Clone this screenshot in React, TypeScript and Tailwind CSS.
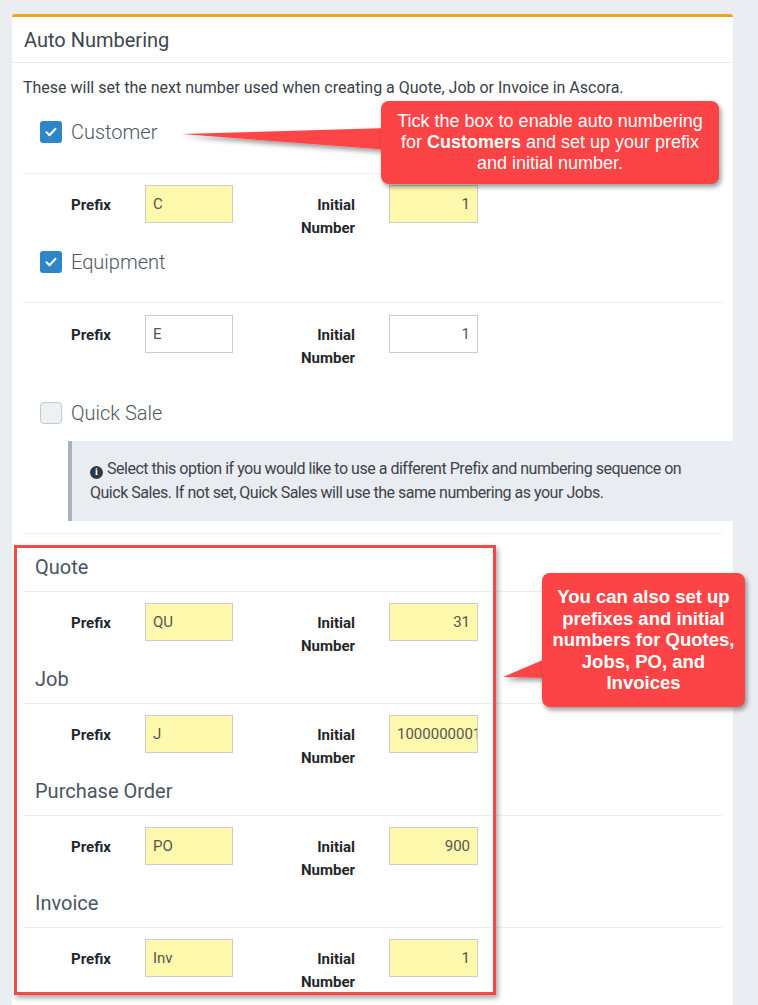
import React from 'react';

type Field = {
  prefix: string;
  initial: string;
  filled: boolean;
};

const font = { fontFamily: 'Roboto, "Noto Sans", sans-serif' };

function CheckBox({ checked }: { checked: boolean }) {
  if (!checked) {
    return (
      <span className="w-[22px] h-[22px] rounded-[4px] border border-[#c3cad2] bg-[#eef1f4]" />
    );
  }
  return (
    <span className="w-[22px] h-[22px] rounded-[3px] bg-[#2d86c7] flex items-center justify-center">
      <svg width="14" height="14" viewBox="0 0 14 14" fill="none">
        <path d="M2.5 7.2l3 3 6-6.4" stroke="white" strokeWidth="2" strokeLinecap="round" strokeLinejoin="round" />
      </svg>
    </span>
  );
}

function CheckRow({ label, checked, className }: { label: string; checked: boolean; className: string }) {
  return (
    <div className={`flex items-center h-[30px] pl-[17px] gap-[9px] ${className}`}>
      <CheckBox checked={checked} />
      <span className="text-[20px] font-light text-[#4c5763]">{label}</span>
    </div>
  );
}

function Input({ value, filled, right }: { value: string; filled: boolean; right?: boolean }) {
  return (
    <div
      className={`h-[38px] border border-[#cccccc] px-[7px] text-[15px] leading-[36px] text-[#555] overflow-hidden whitespace-nowrap ${
        filled ? 'bg-[#fff9ad]' : 'bg-white'
      } ${right ? 'text-right w-[89px]' : 'w-[88px]'}`}
    >
      {value}
    </div>
  );
}

function FieldRow({ field, className }: { field: Field; className: string }) {
  return (
    <div className={`flex items-start ${className}`}>
      <div className="w-[88px] text-right pt-[9px] text-[15px] leading-[23px] font-bold text-[#1f272e]">Prefix</div>
      <div className="ml-[34px]">
        <Input value={field.prefix} filled={field.filled} />
      </div>
      <div className="w-[122px] text-right pt-[9px] text-[15px] leading-[23px] font-bold text-[#1f272e]">
        Initial
        <br />
        Number
      </div>
      <div className="ml-[34px]">
        <Input value={field.initial} filled={field.filled} right />
      </div>
    </div>
  );
}

const Divider = ({ className }: { className: string }) => (
  <div className={`h-px bg-[#eceef1] ${className}`} />
);

const sections: { title: string; field: Field }[] = [
  { title: 'Quote', field: { prefix: 'QU', initial: '31', filled: true } },
  { title: 'Job', field: { prefix: 'J', initial: '1000000001', filled: true } },
  { title: 'Purchase Order', field: { prefix: 'PO', initial: '900', filled: true } },
  { title: 'Invoice', field: { prefix: 'Inv', initial: '1', filled: true } },
];

export default function App() {
  return (
    <div className="relative min-h-[1005px] h-[1005px] overflow-hidden bg-[#eaedf1] pt-[14px] pl-[12px]" style={font}>
      <div className="w-[721px] bg-white border-t-[3px] border-[#f5a21b] rounded-t-[3px] pb-[40px]">
        <div className="h-[46px] flex items-center px-[12px] border-b border-[#e8eaed] text-[20px] text-[#3b4752]">
          Auto Numbering
        </div>
        <div className="px-[11px]">
          <p className="pt-[15px] text-[16px] leading-[20px] text-[#3a4149]">
            These will set the next number used when creating a Quote, Job or Invoice in Ascora.
          </p>

          <CheckRow label="Customer" checked className="mt-[19px]" />
          <Divider className="mt-[26px]" />
          <FieldRow field={{ prefix: 'C', initial: '1', filled: true }} className="mt-[11px]" />

          <CheckRow label="Equipment" checked className="mt-[7px]" />
          <Divider className="mt-[25px]" />
          <FieldRow field={{ prefix: 'E', initial: '1', filled: false }} className="mt-[12px]" />

          <CheckRow label="Quick Sale" checked={false} className="mt-[28px]" />
          <div className="mt-[13px] ml-[45px] -mr-[11px] border-l-[4px] border-[#aab3bb] bg-[#e9ecf0] pl-[18px] pr-[12px] py-[16px] text-[16px] leading-[24px] tracking-[-0.03em] text-[#3d444b]">
            <p className="max-w-[600px]">
              <span
                className="inline-flex align-[-1px] mr-[4px] w-[13px] h-[13px] rounded-full bg-[#2f3942] text-white text-[10px] font-bold items-center justify-center leading-none tracking-normal"
                style={{ fontFamily: '"Liberation Serif", serif' }}
              >
                i
              </span>
              Select this option if you would like to use a different Prefix and numbering sequence on Quick Sales. If
              not set, Quick Sales will use the same numbering as your Jobs.
            </p>
          </div>
          <Divider className="mt-[12px]" />

          {sections.map((s, i) => (
            <div key={s.title}>
              <div className={`text-[20px] leading-[24px] text-[#4a5561] pl-[12px] ${i === 0 ? 'mt-[21px]' : 'mt-[9px]'}`}>
                {s.title}
              </div>
              <Divider className="mt-[12px]" />
              <FieldRow field={s.field} className="mt-[11px]" />
            </div>
          ))}
        </div>
      </div>

      {/* red highlight box */}
      <div className="absolute left-[14px] top-[545px] w-[482px] h-[450px] border-[3px] border-[#f24a4b] shadow-[2px_3px_5px_rgba(0,0,0,0.35)]" />

      {/* callout tails */}
      <svg className="absolute left-0 top-0 pointer-events-none" width="758" height="1005">
        <defs>
          <filter id="sh" x="-20%" y="-20%" width="140%" height="160%">
            <feDropShadow dx="2" dy="3" stdDeviation="2.5" floodColor="#000" floodOpacity="0.4" />
          </filter>
        </defs>
        <polygon points="182,134 390,128 390,150" fill="#fc4446" filter="url(#sh)" />
        <polygon points="503,677 550,657 550,678" fill="#fc4446" filter="url(#sh)" />
      </svg>

      {/* callout 1 */}
      <div
        className="absolute left-[381px] top-[101px] w-[338px] h-[83px] rounded-[8px] bg-[#fc4446] shadow-[2px_3px_5px_rgba(0,0,0,0.4)] flex items-center justify-center text-center text-white text-[18px] leading-[21px]"
        style={{ fontFamily: '"Liberation Sans", Arial, sans-serif' }}
      >
        <p>
          Tick the box to enable auto numbering
          <br />
          for <b>Customers</b> and set up your prefix
          <br />
          and initial number.
        </p>
      </div>

      {/* callout 2 */}
      <div
        className="absolute left-[542px] top-[573px] w-[203px] h-[134px] rounded-[8px] bg-[#fc4446] shadow-[2px_3px_5px_rgba(0,0,0,0.4)] flex items-center justify-center text-center text-white font-bold text-[18.5px] leading-[21.5px]"
        style={{ fontFamily: '"Liberation Sans", Arial, sans-serif' }}
      >
        <p>
          You can also set up
          <br />
          prefixes and initial
          <br />
          numbers for Quotes,
          <br />
          Jobs, PO, and
          <br />
          Invoices
        </p>
      </div>
    </div>
  );
}
